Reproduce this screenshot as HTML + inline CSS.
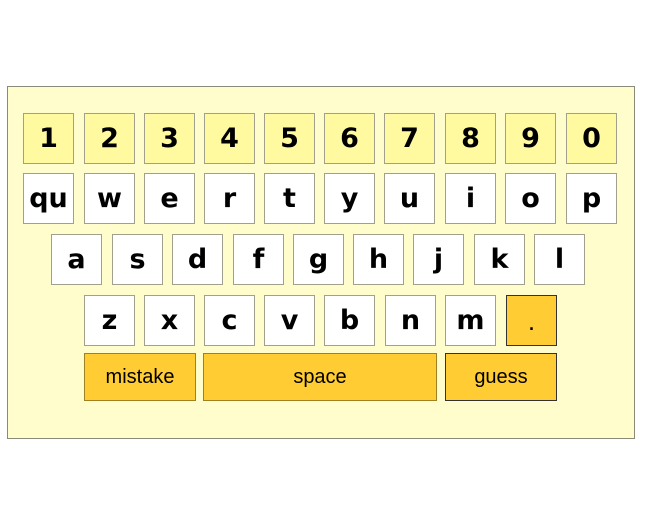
<!DOCTYPE html>
<html><head><style>
body{margin:0;width:646px;height:528px;background:#fff;position:relative;overflow:hidden;font-family:"DejaVu Sans","Liberation Sans",sans-serif}
.p{position:absolute;left:7px;top:86px;width:626px;height:351px;background:#fffdcc;border:1px solid #8a8a7a}
.k{position:absolute;width:51px;height:51px;box-sizing:border-box;border:1px solid #a0a08c;background:#fff;display:flex;align-items:center;justify-content:center;font-weight:bold;font-size:27px;color:#000}
.n{background:#fffaa0}
.o{background:#ffcc33;border:1px solid #333;font-weight:normal;font-family:"Liberation Sans",sans-serif;font-size:20px;height:48px}
</style></head><body>
<div class="p"></div>
<div class="k n" style="left:23px;top:113px">1</div>
<div class="k n" style="left:84px;top:113px">2</div>
<div class="k n" style="left:144px;top:113px">3</div>
<div class="k n" style="left:204px;top:113px">4</div>
<div class="k n" style="left:264px;top:113px">5</div>
<div class="k n" style="left:324px;top:113px">6</div>
<div class="k n" style="left:384px;top:113px">7</div>
<div class="k n" style="left:445px;top:113px">8</div>
<div class="k n" style="left:505px;top:113px">9</div>
<div class="k n" style="left:566px;top:113px">0</div>
<div class="k" style="left:23px;top:173px">qu</div>
<div class="k" style="left:84px;top:173px">w</div>
<div class="k" style="left:144px;top:173px">e</div>
<div class="k" style="left:204px;top:173px">r</div>
<div class="k" style="left:264px;top:173px">t</div>
<div class="k" style="left:324px;top:173px">y</div>
<div class="k" style="left:384px;top:173px">u</div>
<div class="k" style="left:445px;top:173px">i</div>
<div class="k" style="left:505px;top:173px">o</div>
<div class="k" style="left:566px;top:173px">p</div>
<div class="k" style="left:51px;top:234px">a</div>
<div class="k" style="left:112px;top:234px">s</div>
<div class="k" style="left:172px;top:234px">d</div>
<div class="k" style="left:233px;top:234px">f</div>
<div class="k" style="left:293px;top:234px">g</div>
<div class="k" style="left:353px;top:234px">h</div>
<div class="k" style="left:413px;top:234px">j</div>
<div class="k" style="left:474px;top:234px">k</div>
<div class="k" style="left:534px;top:234px">l</div>
<div class="k" style="left:84px;top:295px">z</div>
<div class="k" style="left:144px;top:295px">x</div>
<div class="k" style="left:204px;top:295px">c</div>
<div class="k" style="left:264px;top:295px">v</div>
<div class="k" style="left:324px;top:295px">b</div>
<div class="k" style="left:385px;top:295px">n</div>
<div class="k" style="left:445px;top:295px">m</div>
<div class="k o" style="left:506px;top:295px;height:51px;font-size:26px;align-items:flex-end;padding-bottom:8px">.</div>
<div class="k o" style="left:84px;top:353px;width:112px;border-color:#a08020">mistake</div>
<div class="k o" style="left:203px;top:353px;width:234px;border-color:#a08020">space</div>
<div class="k o" style="left:445px;top:353px;width:112px">guess</div>
</body></html>
